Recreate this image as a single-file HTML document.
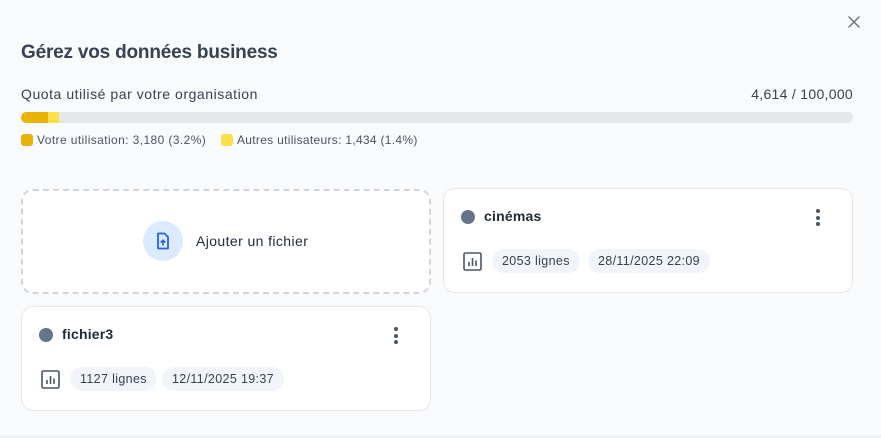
<!DOCTYPE html>
<html><head><meta charset="utf-8"><style>
*{box-sizing:border-box;margin:0;padding:0}
body{width:881px;height:438px;background:#f8fafc;font-family:"Liberation Sans",sans-serif;color:#1f2937;position:relative;overflow:hidden}
.abs{position:absolute}
.card{position:absolute;background:#fff;border:1px solid #e5e7eb;border-radius:12px;width:410px;height:105px}
.dot{position:absolute;left:17px;top:21px;width:14px;height:14px;border-radius:50%;background:#64748b}
.name{position:absolute;left:40px;top:19px;font-size:14px;font-weight:bold;color:#1f2937;letter-spacing:0.2px}
.kebab{position:absolute;left:372px;top:20px;width:4px}
.kebab i{display:block;width:4px;height:4px;border-radius:50%;background:#4b5563;margin-bottom:2.5px}
.chart{position:absolute;left:19px;top:63px}
.chip{position:absolute;top:60px;height:24px;line-height:24px;padding:0 10px;border-radius:12px;background:#f1f5f9;font-size:12.5px;color:#374151;letter-spacing:0.35px}
</style></head><body>
<svg class="abs" style="left:847px;top:15px" width="14" height="14" viewBox="0 0 14 14"><path d="M2 2L12 12M12 2L2 12" stroke="#6b7280" stroke-width="1.5" stroke-linecap="round"/></svg>
<div class="abs" style="left:21px;top:42px;font-size:19px;font-weight:bold;color:#374151;letter-spacing:-0.2px">Gérez vos données business</div>
<div class="abs" style="left:21px;top:86px;font-size:14px;color:#374151;letter-spacing:0.55px">Quota utilisé par votre organisation</div>
<div class="abs" style="right:28px;top:86px;font-size:14px;color:#374151;letter-spacing:0.3px">4,614 / 100,000</div>
<div class="abs" style="left:21px;top:112px;width:832px;height:11px;border-radius:6px;background:#e5e7eb;overflow:hidden">
 <div class="abs" style="left:0;top:0;width:38px;height:11px;background:#fde047"></div>
 <div class="abs" style="left:0;top:0;width:27px;height:11px;background:#eab308;border-radius:6px 0 0 6px"></div>
</div>
<div class="abs" style="left:21px;top:134px;width:12px;height:12px;border-radius:3px;background:#eab308"></div>
<div class="abs" style="left:37px;top:133px;font-size:12px;color:#4b5563;letter-spacing:0.4px">Votre utilisation: 3,180 (3.2%)</div>
<div class="abs" style="left:221px;top:134px;width:12px;height:12px;border-radius:3px;background:#fde047"></div>
<div class="abs" style="left:237px;top:133px;font-size:12px;color:#4b5563;letter-spacing:0.3px">Autres utilisateurs: 1,434 (1.4%)</div>

<div class="abs" style="left:21px;top:189px;width:410px;height:105px;border:2px dashed #d1d5db;border-radius:12px;background:#fff"></div>
<div class="abs" style="left:143px;top:221px;width:40px;height:40px;border-radius:50%;background:#dbeafe"></div>
<svg class="abs" style="left:155px;top:232px" width="16" height="18" viewBox="0 0 16 18"><path d="M3 1.5h6.5L13 5v11.5H3z" fill="none" stroke="#2563eb" stroke-width="1.8" stroke-linejoin="round"/><path d="M8 13.5V8.5M5.8 10.5L8 8.3l2.2 2.2" fill="none" stroke="#2563eb" stroke-width="1.6"/></svg>
<div class="abs" style="left:196px;top:233px;font-size:14px;color:#1f2937;letter-spacing:0.4px">Ajouter un fichier</div>

<div class="card" style="left:443px;top:188px">
 <div class="dot"></div><div class="name">cinémas</div>
 <div class="kebab"><i></i><i></i><i></i></div>
 <svg class="chart" width="19" height="19" viewBox="0 0 19 19"><rect x="1" y="1" width="17" height="17" rx="1.5" fill="none" stroke="#4b5563" stroke-width="1.6"/><path d="M6 14V10M9.5 14V6M13 14V8.5" stroke="#4b5563" stroke-width="1.6"/></svg>
 <div class="chip" style="left:48px">2053 lignes</div>
 <div class="chip" style="left:144px">28/11/2025 22:09</div>
</div>
<div class="card" style="left:21px;top:306px">
 <div class="dot"></div><div class="name">fichier3</div>
 <div class="kebab"><i></i><i></i><i></i></div>
 <svg class="chart" width="19" height="19" viewBox="0 0 19 19"><rect x="1" y="1" width="17" height="17" rx="1.5" fill="none" stroke="#4b5563" stroke-width="1.6"/><path d="M6 14V10M9.5 14V6M13 14V8.5" stroke="#4b5563" stroke-width="1.6"/></svg>
 <div class="chip" style="left:48px">1127 lignes</div>
 <div class="chip" style="left:140px">12/11/2025 19:37</div>
</div>
<div class="abs" style="left:0;top:435px;width:881px;height:3px;background:#eef2f6"></div>
</body></html>
